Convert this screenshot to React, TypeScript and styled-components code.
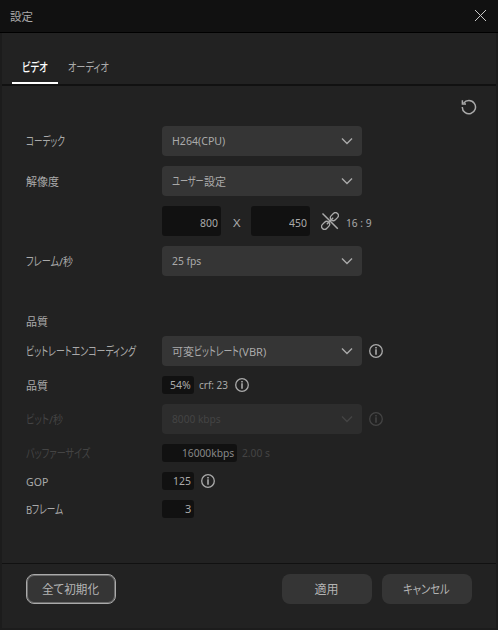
import React, { useLayoutEffect, useRef, useState } from "react";
import styled, { createGlobalStyle, css } from "styled-components";

const Global = createGlobalStyle`
  * { box-sizing: border-box; }
  body { margin: 0; background: #1b1b1b; }
`;

const Window = styled.div`
  width: 498px;
  height: 630px;
  display: flex;
  flex-direction: column;
  background: #222;
  border: 2px solid #1c1c1c;
  border-top: 0;
  color: #aaa;
  font-family: "Noto Sans", "Noto Sans CJK JP", sans-serif;
  font-size: 11px;
  line-height: 16px;
`;

const TitleBar = styled.header`
  height: 33px;
  margin: 0 -2px;
  flex: none;
  display: flex;
  justify-content: space-between;
  align-items: center;
  padding: 0 11px 1px 10px;
  background: #111;
  border-bottom: 1px solid #000;
  font-size: 11.5px;
`;

const TitleText = styled.div`
  padding-top: 2px;
`;

const Tabs = styled.nav`
  height: 53px;
  flex: none;
  display: flex;
  align-items: flex-end;
  padding-left: 10px;
  border-bottom: 2px solid #111;
`;

const Tab = styled.div<{ $active?: boolean }>`
  height: 32px;
  padding: 8px 10px 0;
  color: ${(p) => (p.$active ? "#fff" : "#aaa")};
  font-weight: ${(p) => (p.$active ? 500 : 400)};
  border-bottom: 2px solid ${(p) => (p.$active ? "#fff" : "transparent")};
`;

const ResetBar = styled.div`
  height: 40px;
  flex: none;
  display: flex;
  justify-content: flex-end;
  padding: 13px 19px 0 0;
`;

const Form = styled.main`
  flex: 1;
  padding-left: 24px;
`;

const Row = styled.div<{ $h?: number; $gap?: number; $disabled?: boolean }>`
  display: flex;
  align-items: center;
  height: ${(p) => p.$h ?? 30}px;
  margin-bottom: ${(p) => p.$gap ?? 10}px;
  color: ${(p) => (p.$disabled ? "#444" : "#aaa")};
`;

const Label = styled.div`
  width: 136px;
  flex: none;
  display: flex;
  padding-top: 2px;
`;

const Select = styled.div<{ $disabled?: boolean }>`
  width: 200px;
  height: 30px;
  flex: none;
  display: flex;
  justify-content: space-between;
  align-items: center;
  padding: 0 9px 0 10px;
  border-radius: 4px;
  background: ${(p) => (p.$disabled ? "#2d2d2d" : "#353535")};
`;

const Field = styled.div<{ $w: number; $tall?: boolean }>`
  width: ${(p) => p.$w}px;
  height: ${(p) => (p.$tall ? 30 : 18)}px;
  flex: none;
  display: flex;
  justify-content: flex-end;
  align-items: center;
  padding: ${(p) => (p.$tall ? "3px 3px 0 0" : "0 3px 0 0")};
  border-radius: 3px;
  background: #111;
`;

const BufferValue = styled.div`
  color: #888;
`;

const Note = styled.span<{ $ml: number; $top?: number }>`
  display: flex;
  margin-left: ${(p) => p.$ml}px;
  padding-top: ${(p) => p.$top ?? 0}px;
`;

const Footer = styled.footer`
  height: 65px;
  flex: none;
  display: flex;
  gap: 10px;
  padding: 10px 24px 0;
  border-top: 1px solid #111;
  font-size: 12px;
`;

const Button = styled.button<{ $outlined?: boolean }>`
  width: 90px;
  height: 30px;
  display: flex;
  justify-content: center;
  align-items: center;
  padding: 2px 1px 0 0;
  border: 0;
  border-radius: 8px;
  background: #353535;
  color: #b4b4b4;
  font: inherit;
  ${(p) =>
    p.$outlined &&
    css`
      margin-right: auto;
      border: 1px solid #aaa;
      box-shadow: inset 0 0 0 1px #6c6c6c;
    `}
`;

const FitBox = styled.span<{ $w: number }>`
  display: block;
  height: 16px;
  width: ${(p) => p.$w}px;
  flex: none;
  white-space: pre;
`;

const FitText = styled.span<{ $kana?: boolean }>`
  display: inline-block;
  transform-origin: 0 50%;
  font-feature-settings: "palt";
  ${(p) =>
    p.$kana &&
    css`
      font-size: 12.5px;
      line-height: 15px;
    `}
`;

/** A run of text condensed horizontally to a set width. */
function Fit({ w, children }: { w: number; children: string }) {
  const ref = useRef<HTMLSpanElement>(null);
  const [scale, setScale] = useState(1);
  useLayoutEffect(() => {
    if (ref.current) setScale(w / ref.current.offsetWidth);
  }, [w, children]);
  return (
    <FitBox $w={w}>
      <FitText
        ref={ref}
        $kana={/^[\u30a0-\u30ff]+$/.test(children)}
        style={{ transform: `scaleX(${scale})` }}
      >
        {children}
      </FitText>
    </FitBox>
  );
}

const Chevron = () => (
  <svg width="12" height="8" viewBox="0 0 12 8" fill="none" stroke="currentColor" strokeWidth="1.4">
    <path d="M1 1.5 6 6.5 11 1.5" />
  </svg>
);

const Info = () => (
  <svg width="14" height="14" viewBox="0 0 14 14" fill="none" stroke="currentColor">
    <circle cx="7" cy="7" r="6.3" strokeWidth="1.3" />
    <path d="M7 3v1.5M7 5.3v5.4" strokeWidth="1.6" />
  </svg>
);

const Close = () => (
  <svg width="13" height="13" viewBox="0 0 13 13" stroke="#c8c8c8" strokeWidth="1">
    <path d="M1 1 12 12M12 1 1 12" />
  </svg>
);

const Reset = () => (
  <svg width="17" height="17" viewBox="0 0 17 17" fill="none" stroke="#aaa" strokeWidth="1.5">
    <path d="M3.6 4.2A6.6 6.6 0 1 1 2.3 8" />
    <path d="M2.4 1.3V4.9H6" />
  </svg>
);

const Unlink = () => (
  <svg width="18" height="18" viewBox="0 0 18 18" fill="none" stroke="#aaa" strokeWidth="1.3">
    <g transform="rotate(-45 9 9)">
      <rect x="-1.6" y="6.1" width="8.8" height="5.8" rx="2.9" />
      <rect x="10.8" y="6.1" width="8.8" height="5.8" rx="2.9" />
      <path d="M4.5 9H13.5" />
    </g>
    <path d="M1.5 1.5 16.8 16.8" strokeWidth="1.5" />
  </svg>
);

export default function App() {
  return (
    <Window>
      <Global />
      <TitleBar>
        <TitleText><Fit w={23}>設定</Fit></TitleText>
        <Close />
      </TitleBar>
      <Tabs>
        <Tab $active><Fit w={26}>ビデオ</Fit></Tab>
        <Tab><Fit w={41}>オーディオ</Fit></Tab>
      </Tabs>
      <ResetBar><Reset /></ResetBar>
      <Form>
        <Row>
          <Label><Fit w={39}>コーデック</Fit></Label>
          <Select><Fit w={53}>H264(CPU)</Fit><Chevron /></Select>
        </Row>
        <Row>
          <Label><Fit w={33}>解像度</Fit></Label>
          <Select><Note $ml={0} $top={1}><Fit w={32}>ユーザー</Fit><Fit w={22}>設定</Fit></Note><Chevron /></Select>
        </Row>
        <Row>
          <Label />
          <Field $w={59} $tall><Fit w={18}>800</Fit></Field>
          <Note $ml={12} $top={3}><Fit w={7}>X</Fit></Note>
          <Note $ml={11}><Field $w={59} $tall><Fit w={18}>450</Fit></Field></Note>
          <Note $ml={11}><Unlink /></Note>
          <Note $ml={7} $top={3}><Fit w={26}>16 : 9</Fit></Note>
        </Row>
        <Row $gap={37}>
          <Label><Fit w={33}>フレーム</Fit><Fit w={4}>/</Fit><Fit w={10}>秒</Fit></Label>
          <Select><Fit w={29}>25 fps</Fit><Chevron /></Select>
        </Row>
        <Row $h={16} $gap={7}><Label><Fit w={22}>品質</Fit></Label></Row>
        <Row>
          <Label><Fit w={110}>ビットレートエンコーディング</Fit></Label>
          <Select>
            <Note $ml={0} $top={1}><Fit w={22}>可変</Fit><Fit w={45}>ビットレート</Fit><Fit w={27}>(VBR)</Fit></Note>
            <Chevron />
          </Select>
          <Note $ml={7}><Info /></Note>
        </Row>
        <Row $h={18}>
          <Label><Fit w={22}>品質</Fit></Label>
          <Field $w={32}><Fit w={21}>54%</Fit></Field>
          <Note $ml={5}><Fit w={29}>crf: 23</Fit></Note>
          <Note $ml={7}><Info /></Note>
        </Row>
        <Row $disabled>
          <Label><Fit w={23}>ビット</Fit><Fit w={4}>/</Fit><Fit w={10}>秒</Fit></Label>
          <Select $disabled><Fit w={49}>8000 kbps</Fit><Chevron /></Select>
          <Note $ml={7}><Info /></Note>
        </Row>
        <Row $h={18} $disabled>
          <Label><Fit w={64}>バッファーサイズ</Fit></Label>
          <BufferValue><Field $w={75}><Fit w={52}>16000kbps</Fit></Field></BufferValue>
          <Note $ml={5}><Fit w={28}>2.00 s</Fit></Note>
        </Row>
        <Row $h={18}>
          <Label><Fit w={22}>GOP</Fit></Label>
          <Field $w={32}><Fit w={18}>125</Fit></Field>
          <Note $ml={7}><Info /></Note>
        </Row>
        <Row $h={18}>
          <Label><Fit w={6}>B</Fit><Fit w={31}>フレーム</Fit></Label>
          <Field $w={32}><Fit w={6}>3</Fit></Field>
        </Row>
      </Form>
      <Footer>
        <Button $outlined><Fit w={57}>全て初期化</Fit></Button>
        <Button><Fit w={24}>適用</Fit></Button>
        <Button><Fit w={47}>キャンセル</Fit></Button>
      </Footer>
    </Window>
  );
}
